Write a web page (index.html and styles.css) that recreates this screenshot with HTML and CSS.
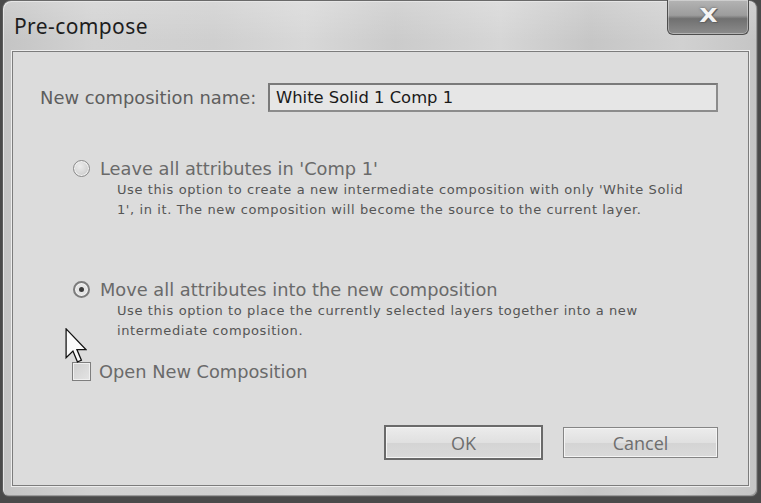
FILE: index.html
```html
<!DOCTYPE html>
<html>
<head>
<meta charset="utf-8">
<title>Pre-compose</title>
<link rel="stylesheet" href="styles.css">
</head>
<body>
<div class="window">
  <div class="titlebar">
    <div class="title">Pre-compose</div>
    <div class="close"><span class="close-x">X</span></div>
  </div>
  <div class="panel">
    <div class="name-row">
      <label class="name-label">New composition name:</label>
      <div class="name-input">White Solid 1 Comp 1</div>
    </div>

    <div class="option option-first">
      <div class="option-head">
        <span class="radio"></span>
        <span class="option-label">Leave all attributes in 'Comp 1'</span>
      </div>
      <p class="option-desc">Use this option to create a new intermediate composition with only 'White Solid 1', in it. The new composition will become the source to the current layer.</p>
    </div>

    <div class="option option-second">
      <div class="option-head">
        <span class="radio checked"></span>
        <span class="option-label">Move all attributes into the new composition</span>
      </div>
      <p class="option-desc">Use this option to place the currently selected layers together into a new intermediate composition.</p>
    </div>

    <div class="check-row">
      <span class="checkbox"></span>
      <span class="option-label">Open New Composition</span>
    </div>

    <div class="buttons">
      <div class="btn btn-default">OK</div>
      <div class="btn">Cancel</div>
    </div>

    <svg class="cursor" width="22" height="36" viewBox="0 0 12 20">
      <path d="M0.5,0.5 L0.5,16.5 L4.3,12.8 L6.8,18.8 L9,17.9 L6.5,12 L11.5,12 Z" fill="#fafafa" stroke="#111" stroke-width="0.7" stroke-linejoin="miter"/>
    </svg>
  </div>
</div>
</body>
</html>
```

FILE: styles.css
```css
html, body {
  margin: 0;
  padding: 0;
}

body {
  width: 761px;
  height: 503px;
  overflow: hidden;
  background: #4a4a4a;
  font-family: "DejaVu Sans", Verdana, sans-serif;
}

.window {
  box-sizing: border-box;
  margin-left: 2px;
  width: 756px;
  height: 497px;
  border: 1px solid #5c5c5c;
  border-top-color: #6a6a6a;
  border-radius: 9px 9px 7px 7px;
  background:
    linear-gradient(180deg, rgba(255,255,255,0.18) 0, rgba(255,255,255,0) 40px),
    linear-gradient(90deg, #c4c4c4 0, #d2d2d2 12%, #cfcfcf 28%, #d8d8d8 40%, #cbcbcb 52%, #d6d6d6 66%, #c6c6c6 78%, #d1d1d1 90%, #c5c5c5 100%);
  box-shadow: inset 1px 1px 0 #e6e6e6, inset -1px -1px 0 #9a9a9a;
  padding: 0 8px 10px 9px;
  display: flex;
  flex-direction: column;
  position: relative;
}

.titlebar {
  height: 50px;
  display: flex;
  justify-content: space-between;
  align-items: flex-start;
  flex: none;
}

.title {
  font-family: "Noto Sans", "Open Sans", sans-serif;
  font-size: 21px;
  color: #1e1e1e;
  padding-left: 2px;
  margin-top: 11px;
  letter-spacing: 0.4px;
}

.close {
  box-sizing: border-box;
  width: 82px;
  height: 35px;
  margin-top: -1px;
  margin-right: 0;
  border: 1px solid #4e4e4e;
  border-top: none;
  border-radius: 0 0 6px 6px;
  background: linear-gradient(180deg, #b4b4b4 0, #9c9c9c 45%, #707070 55%, #8c8c8c 100%);
  box-shadow: inset 0 0 0 1px rgba(255,255,255,0.35);
  display: flex;
  align-items: center;
  justify-content: center;
}

.close-x {
  font-family: "DejaVu Sans", sans-serif;
  font-weight: bold;
  font-size: 19px;
  color: #f4f4f4;
  text-shadow: 0 0 2px #555, 1px 1px 0 #666;
  transform: scaleX(1.25);
  margin-top: -4px;
}

.panel {
  flex: 1;
  position: relative;
  background: #dcdcdc;
  border: 1px solid #7c7c7c;
  box-shadow: 0 0 0 1px #ededed;
  padding: 0 30px 0 27px;
  display: flex;
  flex-direction: column;
}

.name-row {
  display: flex;
  align-items: center;
  margin-top: 31px;
}

.name-label {
  width: 228px;
  flex: none;
  font-size: 17.9px;
  color: #5e5e5e;
}

.name-input {
  flex: 1;
  box-sizing: border-box;
  height: 29px;
  border: 2px solid #7a7a7a;
  border-right-color: #8c8c8c;
  border-bottom-color: #8c8c8c;
  background: #e6e6e6;
  padding: 0 0 0 6px;
  line-height: 25px;
  font-size: 16.4px;
  color: #1a1a1a;
}

.option {
  display: flex;
  flex-direction: column;
  padding-left: 32px;
}

.option-first {
  margin-top: 46px;
}

.option-second {
  margin-top: 59px;
}

.option-head {
  display: flex;
  align-items: center;
  gap: 10px;
  margin-left: 1px;
}

.option-label {
  font-size: 17.8px;
  color: #6a6a6a;
}

.radio {
  box-sizing: border-box;
  width: 17px;
  height: 17px;
  border-radius: 50%;
  border: 1px solid #8a8a8a;
  background: radial-gradient(circle at 40% 35%, #ececec 0, #d0d0d0 70%, #c4c4c4 100%);
  box-shadow: inset 0 0 0 1px #f2f2f2;
  position: relative;
  flex: none;
}

.radio.checked {
  border: 2px solid #7c7c7c;
  background: #e4e4e4;
  box-shadow: inset 0 0 0 1px #f6f6f6;
}

.radio.checked::after {
  content: "";
  position: absolute;
  left: 4px;
  top: 4px;
  width: 5px;
  height: 5px;
  border-radius: 50%;
  background: #3a3a3a;
}

.option-desc {
  margin: 1px 0 0 45px;
  font-family: "DejaVu Sans", sans-serif;
  font-size: 13px;
  line-height: 20px;
  color: #555555;
  width: 576px;
  letter-spacing: 0.6px;
}

.check-row {
  display: flex;
  align-items: center;
  gap: 8px;
  margin-top: 20px;
  padding-left: 32px;
}

.checkbox {
  box-sizing: border-box;
  width: 19px;
  height: 19px;
  border: 1px solid #7e7e7e;
  background: linear-gradient(135deg, #cfcfcf 0, #e4e4e4 100%);
  box-shadow: inset 0 0 0 1px #f0f0f0;
  flex: none;
}

.buttons {
  margin-top: auto;
  margin-bottom: 25px;
  display: flex;
  justify-content: flex-end;
  align-items: center;
  gap: 20px;
}

.btn {
  box-sizing: border-box;
  width: 155px;
  height: 31px;
  border: 1px solid #858585;
  background: linear-gradient(180deg, #ececec 0, #e0e0e0 50%, #d4d4d4 51%, #dadada 100%);
  box-shadow: inset 0 0 0 1px #f4f4f4;
  display: flex;
  align-items: center;
  justify-content: center;
  font-family: "Open Sans", "Noto Sans", sans-serif;
  font-size: 18px;
  color: #6e6e6e;
}

.btn-default {
  width: 159px;
  height: 35px;
  border: 2px solid #6a6a6a;
}

.cursor {
  position: absolute;
  left: 52px;
  top: 276px;
  z-index: 5;
}
```
